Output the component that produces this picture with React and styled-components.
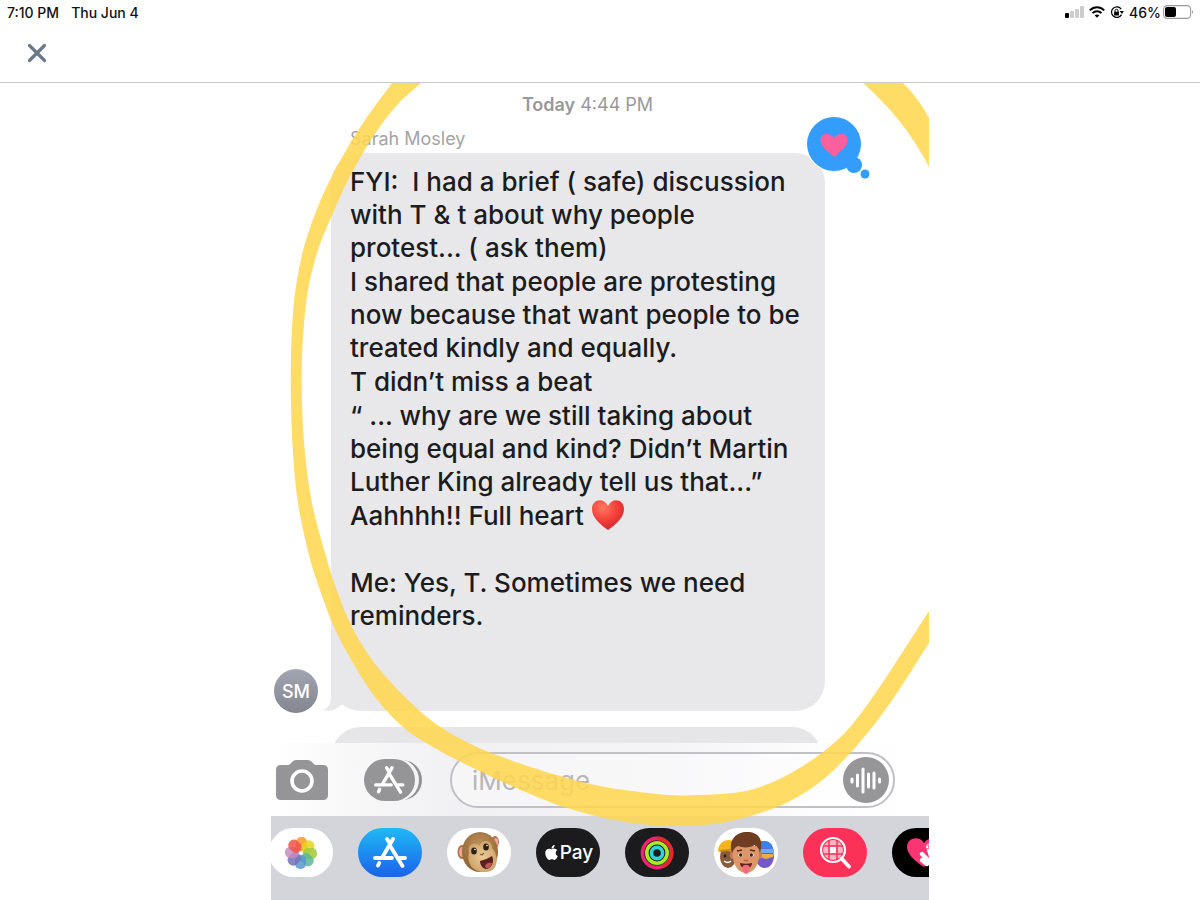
import styled, { createGlobalStyle, css } from 'styled-components';
import { FaApple } from 'react-icons/fa6';

const GlobalStyle = createGlobalStyle`
  * {
    box-sizing: border-box;
  }

  body {
    margin: 0;
    background: #fff;
    font-family: Inter, "Liberation Sans", sans-serif;
    color: #1c1c1e;
  }

  button {
    padding: 0;
    border: none;
    background: none;
    font-family: inherit;
    cursor: pointer;
  }
`;

const Page = styled.div`
  display: flex;
  flex-direction: column;
  min-height: 100vh;
`;

const StatusBar = styled.div`
  display: flex;
  justify-content: space-between;
  align-items: center;
  height: 24px;
  padding: 0 6px 0 7px;
  font-size: 14px;
  font-weight: 500;
  color: #111;
`;

const StatusGroup = styled.div`
  display: flex;
  align-items: center;
  gap: ${({ $gap }) => $gap}px;
`;

const Battery = styled.span`
  display: flex;
  align-items: center;
  gap: 2px;
`;

const NavBar = styled.header`
  display: flex;
  align-items: center;
  height: 59px;
  padding: 0 24px;
  border-bottom: 1px solid #c9cacc;
`;

const CloseButton = styled.button`
  display: flex;
  justify-content: center;
  align-items: center;
  width: 26px;
  height: 26px;
`;

const Photo = styled.main`
  position: relative;
  display: flex;
  flex-direction: column;
  width: 100%;
  max-width: 658px;
  margin: 0 auto;
  flex: 1;
  overflow: hidden;
`;

const Marker = styled.svg`
  position: absolute;
  top: 0;
  left: 0;
  width: 100%;
  pointer-events: none;
`;

const Chat = styled.section`
  display: flex;
  flex-direction: column;
  padding: 12px 0 0 3px;
`;

const Timestamp = styled.div`
  padding-right: 28px;
  font-size: 18px;
  line-height: 20px;
  text-align: center;
  color: #98989d;

  b {
    font-weight: 600;
  }
`;

const Sender = styled.div`
  padding: 13px 0 4px 76px;
  font-size: 18px;
  line-height: 21px;
  color: #a3a3a8;
`;

const MessageRow = styled.div`
  display: flex;
  align-items: flex-end;
  gap: 13px;
`;

const Avatar = styled.div`
  display: flex;
  justify-content: center;
  align-items: center;
  flex: none;
  width: 44px;
  height: 44px;
  border-radius: 50%;
  background: linear-gradient(#a2a6b3, #83858f);
  color: #fff;
  font-size: 18px;
  font-weight: 500;
`;

const Bubble = styled.div`
  position: relative;
  flex: 1;
  margin: 0 104px 2px 0;
  padding: 12px 0 79px 19px;
  border-radius: 30px;
  background: #e8e8ea;
`;

const Tail = styled.svg`
  position: absolute;
  left: -9px;
  bottom: 0;
`;

const Reaction = styled.svg`
  position: absolute;
  top: -37px;
  right: -47px;
`;

const MessageText = styled.div`
  position: relative;
  z-index: 1;
  display: grid;
  gap: 1px;
  font-size: 26px;
  font-weight: 450;
  line-height: 33px;
  white-space: pre;

  p {
    margin: 0;
  }

  p:last-child {
    margin-top: 33px;
  }

  svg {
    vertical-align: -6px;
  }
`;

const NextBubble = styled.div`
  height: 60px;
  margin: 14px 107px -44px 57px;
  border-radius: 30px;
  background: #e6e6e8;
`;

const Toolbar = styled.div`
  display: flex;
  align-items: center;
  padding: 9px 34px 8px 5px;
  background: linear-gradient(90deg, #fff 0%, #f8f8f9 12%, #f1f1f3 28%, #f4f4f6 60%, #fdfdfe 84%, #fff 100%);
`;

const ToolButton = styled.button`
  display: flex;
  flex: none;
  margin-right: ${({ $space }) => $space}px;
`;

const Field = styled.div`
  display: flex;
  align-items: center;
  flex: 1;
  min-width: 0;
  height: 56px;
  padding: 0 4px 0 20px;
  border: 2px solid #c0c0c5;
  border-radius: 28px;
  background: rgba(255, 255, 255, 0.35);
`;

const MessageInput = styled.input`
  flex: 1;
  width: 100%;
  min-width: 0;
  padding: 0;
  border: none;
  outline: none;
  background: none;
  font-family: inherit;
  font-size: 26px;

  &::placeholder {
    color: #b6b6bb;
    opacity: 1;
  }
`;

const Tray = styled.nav`
  display: flex;
  align-items: flex-start;
  gap: 25px;
  flex: 1;
  min-height: 84px;
  padding: 12px 0 0;
  margin-left: -2px;
  background: #d4d5db;
`;

const pillColors = {
  white: '#fff',
  blue: 'linear-gradient(#1fb9f6, #1b63ea)',
  dark: '#1b1b1d',
  pink: '#fc3158',
  black: '#000',
};

const AppPill = styled.button`
  display: flex;
  justify-content: center;
  align-items: center;
  flex: none;
  width: 64px;
  height: 49px;
  border-radius: 25px;
  background: ${({ $tone }) => pillColors[$tone]};
  ${({ $label }) => $label && css`
    color: #fff;
    font-size: 19px;
    font-weight: 500;
  `}
`;

// smooth curve through a list of points
const curve = (pts, first) => {
  let d = `${first} ${pts[0][0]} ${pts[0][1]}`;
  for (let i = 0; i < pts.length - 1; i++) {
    const p0 = pts[i - 1] || pts[i];
    const p1 = pts[i];
    const p2 = pts[i + 1];
    const p3 = pts[i + 2] || p2;
    d += ` C ${p1[0] + (p2[0] - p0[0]) / 6} ${p1[1] + (p2[1] - p0[1]) / 6}`;
    d += ` ${p2[0] - (p3[0] - p1[0]) / 6} ${p2[1] - (p3[1] - p1[1]) / 6} ${p2[0]} ${p2[1]}`;
  }
  return d;
};

const outer = [
  [121, 0], [92, 40], [74, 69], [58, 99], [44, 131], [33, 164], [26, 197], [22, 230],
  [20, 275], [20, 320], [22, 370], [27, 420], [38, 472], [50, 510], [63, 544], [82, 580],
  [104, 614], [132, 644], [162, 664], [200, 684], [252, 708], [290, 723], [329, 734],
  [370, 741], [410, 743], [450, 740], [486, 731], [519, 718], [554, 695], [589, 659],
  [622, 616], [658, 560],
];

const inner = [
  [658, 528], [638, 559], [610, 602], [580, 643], [552, 669], [520, 690], [489, 704],
  [462, 710], [429, 712], [396, 712], [362, 708], [329, 703], [289, 693], [239, 677],
  [202, 662], [165, 641], [131, 611], [102, 578], [81, 544], [66, 508], [54, 470],
  [41, 420], [34, 370], [31, 320], [31, 275], [34, 230], [39, 197], [48, 164], [62, 130],
  [77, 97], [92, 70], [108, 45], [127, 21], [150, 0],
];

function YellowMarker() {
  return (
    <Marker viewBox="0 0 658 817" aria-hidden="true">
      <g fill="#ffd64d" fillOpacity="0.86">
        <path d={`${curve(outer, 'M')} ${curve(inner, 'L')} Z`} />
        <path d="M592 0 C617 22 641 50 658 84 L658 35 C650 20 642 10 632 0 Z" />
      </g>
    </Marker>
  );
}

function StatusIcons() {
  return (
    <>
      <svg width="19" height="12" viewBox="0 0 19 12" aria-label="Signal">
        <rect x="0" y="7" width="4" height="5" rx="1" fill="#000" />
        <rect x="5" y="5" width="4" height="7" rx="1" fill="#ccc" />
        <rect x="10" y="3" width="4" height="9" rx="1" fill="#ccc" />
        <rect x="15" y="0" width="4" height="12" rx="1" fill="#ccc" />
      </svg>
      <svg width="16" height="12" viewBox="0 0 16 12" aria-label="Wi-Fi">
        <g fill="none" stroke="#000" strokeWidth="2">
          <path d="M0.8 4.4 C5 0.2 11 0.2 15.2 4.4" />
          <path d="M3.5 7.1 C6 4.6 10 4.6 12.5 7.1" />
        </g>
        <path d="M8 11.8 L5.6 9.3 C7 8.1 9 8.1 10.4 9.3 Z" />
      </svg>
      <svg width="14" height="13" viewBox="0 0 14 13" aria-label="Rotation lock">
        <path d="M11.3 3.3 A5.3 5.3 0 1 0 11.5 8.6" fill="none" stroke="#000" strokeWidth="1.2" />
        <path d="M9.6 5 L13.8 5 L12 8 Z" />
        <rect x="4.1" y="5.8" width="4.8" height="3.7" rx="0.5" />
        <path d="M5 6 V4.8 A1.5 1.5 0 0 1 8 4.8 V6" fill="none" stroke="#000" />
      </svg>
    </>
  );
}

function StoreGlyph() {
  return (
    <g fill="none" stroke="#fff" strokeWidth="3.8" strokeLinecap="round">
      <path d="M20 2 L9.5 20" />
      <path d="M14 2 L16.5 6" />
      <path d="M17.5 9.5 L29.5 29" />
      <path d="M2 21 H19" />
      <path d="M27 21 H32" />
      <path d="M6.2 26 L5 28.5" />
    </g>
  );
}

function PhotosIcon() {
  const petals = ['#f79a1e', '#e3d51f', '#9dc93c', '#5cba94', '#5a97cf', '#7273b8', '#c58bc0', '#ee5348'];
  return (
    <svg width="36" height="36" viewBox="-18 -18 36 36" aria-hidden="true">
      {petals.map((color, i) => (
        <rect
          key={color}
          x="-5"
          y="-16"
          width="11"
          height="14"
          rx="5"
          fill={color}
          fillOpacity="0.85"
          transform={`rotate(${i * 45})`}
        />
      ))}
    </svg>
  );
}

function MonkeyIcon() {
  return (
    <svg width="44" height="42" viewBox="0 0 44 42" aria-hidden="true">
      <defs>
        <radialGradient id="fur" cx="0.5" cy="0.35" r="0.65">
          <stop offset="0" stopColor="#c0935a" />
          <stop offset="1" stopColor="#8f6236" />
        </radialGradient>
        <radialGradient id="muzzle">
          <stop offset="0" stopColor="#eccb96" />
          <stop offset="1" stopColor="#cfa56c" />
        </radialGradient>
      </defs>
      <ellipse cx="5" cy="20" rx="4.5" ry="7" fill="#a8743d" />
      <ellipse cx="5" cy="20" rx="3" ry="5" fill="#eda79a" />
      <ellipse cx="38" cy="10" rx="4" ry="6" fill="#a8743d" />
      <ellipse cx="39" cy="10" rx="2.2" ry="4" fill="#eda79a" />
      <ellipse cx="23" cy="20" rx="18" ry="20" fill="url(#fur)" />
      <path d="M12 21 C10 12 18 9 22 14 C26 6 35 8 35 16 C43 24 41 40 29 40 C17 41 9 32 12 21 Z" fill="url(#muzzle)" />
      <ellipse cx="17" cy="19" rx="2.8" ry="3.6" fill="#2b2118" />
      <ellipse cx="29" cy="15" rx="2.8" ry="3.6" fill="#2b2118" />
      <circle cx="18" cy="17.5" r="0.8" fill="#fff" />
      <circle cx="30" cy="13.5" r="0.8" fill="#fff" />
      <path d="M23 22 l2 1 l2 -2" stroke="#8a5f35" strokeWidth="1.2" fill="none" />
      <path d="M23 29 C27 28 32 26 35 24 C38 30 34 37 29 37 C26 37 23 33 23 29 Z" fill="#5a1f22" />
      <path d="M28 34 C29 31 32 30 35 31 C34 35 31 37 29 36 Z" fill="#c0565e" />
    </svg>
  );
}

function RingsIcon() {
  return (
    <svg width="34" height="34" viewBox="-17 -17 34 34" aria-hidden="true">
      <g fill="none" strokeWidth="3.6">
        <circle r="14.6" stroke="#f0246e" />
        <path d="M0 -14.6 A14.6 14.6 0 0 1 6 13.3" stroke="#e8262d" />
        <circle r="10.2" stroke="#a5ec22" />
        <circle r="5.6" stroke="#2cd5da" />
      </g>
    </svg>
  );
}

function MemojiIcon() {
  return (
    <svg width="60" height="44" viewBox="0 0 60 44" aria-hidden="true">
      <ellipse cx="12" cy="26" rx="8" ry="11" fill="#8a5a3a" />
      <path d="M2 21 C2 13 7 9 13 9 C18 9 20 12 21 19 L20 22 C12 19 7 20 2 21 Z" fill="#f2b51d" />
      <path d="M4 20 L20 18" stroke="#d08d12" strokeWidth="2" />
      <circle cx="9" cy="25" r="1.4" fill="#24150e" />
      <path d="M8 30 q4 3 7 0" stroke="#fff" strokeWidth="1.5" fill="none" />
      <path d="M39 14 C42 8 56 8 57 18 L58 26 C57 34 53 37 48 37 C42 36 39 30 39 24 Z" fill="#7659c8" />
      <path d="M40 17 C41 8 56 7 57 18 Z" fill="#3d82e8" />
      <path d="M40 18 H58 V22 H40 Z" fill="#6faaf3" />
      <path d="M44 23 H57 V26 L50 28 L44 26 Z" fill="#e7ae46" />
      <ellipse cx="17" cy="24" rx="3" ry="4" fill="#c97f58" />
      <ellipse cx="43" cy="24" rx="3" ry="4" fill="#c97f58" />
      <path d="M17 15 H43 V27 C42 36 36 42 30 42 C24 42 18 36 17 27 Z" fill="#dc9669" />
      <path d="M16 22 C12 9 20 1 31 1 C43 1 48 9 44 22 C43 18 42 16 39 14 C34 17 27 17 22 15 C19 16 18 18 16 22 Z" fill="#6f3d22" />
      <path d="M21 20 l5 -1 M34 19 l5 1" stroke="#5c301a" strokeWidth="1.6" />
      <ellipse cx="24.5" cy="24" rx="2.3" ry="1.8" fill="#fff" />
      <ellipse cx="35.5" cy="24" rx="2.3" ry="1.8" fill="#fff" />
      <circle cx="24.7" cy="24" r="1.7" fill="#37251b" />
      <circle cx="35.3" cy="24" r="1.7" fill="#37251b" />
      <path d="M28 29 q2 1.5 4 0" stroke="#b5653f" strokeWidth="1.2" fill="none" />
      <path d="M24 32 C28 33 32 33 36 32 C36 35 34 37 30 37 C26 37 24 35 24 32 Z" fill="#662021" />
      <path d="M26.5 35 C28 33.5 32 33.5 33.5 35 L32.5 41 C31 43.5 29 43.5 27.5 41 Z" fill="#f06d7c" />
    </svg>
  );
}

function ImagesIcon() {
  return (
    <svg width="34" height="34" viewBox="0 0 34 34" aria-hidden="true">
      <g fill="none" stroke="#fff">
        <circle cx="15" cy="14" r="12" strokeWidth="2.2" />
        <circle cx="15" cy="14" r="10" fill="#fff" fillOpacity="0.65" stroke="none" />
        <path d="M5 10 H25 M5 18 H25 M11 4 V24 M19 4 V24" stroke="#fc3158" strokeWidth="1.5" />
        <rect x="12" y="11" width="6" height="6" fill="#fff" stroke="none" />
        <path d="M23.5 22.5 L31 30.5" strokeWidth="3.8" strokeLinecap="round" />
      </g>
    </svg>
  );
}

function HeartHandIcon() {
  return (
    <svg width="34" height="32" viewBox="0 0 34 32" aria-hidden="true">
      <path d="M17 30 C6 23 0 16 0 10 C0 1 12 -2 17 6 C22 -2 34 1 34 10 C34 16 28 23 17 30 Z" fill="#fb3474" />
      <g fill="none" stroke="#fff" strokeWidth="4.4" strokeLinecap="round">
        <path d="M15 17 L24 26 M21 9 L25 22 M15 23 L20 27" />
      </g>
      <circle cx="20" cy="10" r="2" fill="none" stroke="#fb3474" />
    </svg>
  );
}

const apps = [
  { name: 'Photos', tone: 'white', icon: <PhotosIcon /> },
  {
    name: 'App Store',
    tone: 'blue',
    icon: <svg width="34" height="31" viewBox="0 0 34 31" aria-hidden="true"><StoreGlyph /></svg>,
  },
  { name: 'Animoji', tone: 'white', icon: <MonkeyIcon /> },
  { name: 'Apple Pay', tone: 'dark', label: true, icon: <><FaApple size={17} />Pay</> },
  { name: 'Activity', tone: 'dark', icon: <RingsIcon /> },
  { name: 'Memoji', tone: 'white', icon: <MemojiIcon /> },
  { name: 'Images', tone: 'pink', icon: <ImagesIcon /> },
  { name: 'Digital Touch', tone: 'black', icon: <HeartHandIcon /> },
];

const paragraphs = [
  'FYI:  I had a brief ( safe) discussion\nwith T & t about why people\nprotest... ( ask them)',
  'I shared that people are protesting\nnow because that want people to be\ntreated kindly and equally.',
  'T didn’t miss a beat',
  '“ ... why are we still taking about\nbeing equal and kind? Didn’t Martin\nLuther King already tell us that...”',
];

export default function App() {
  return (
    <Page>
      <GlobalStyle />
      <StatusBar>
        <StatusGroup $gap={12}>
          <span>7:10 PM</span>
          <span>Thu Jun 4</span>
        </StatusGroup>
        <StatusGroup $gap={5}>
          <StatusIcons />
          <Battery>
            46%
            <svg width="31" height="14" viewBox="0 0 31 14" aria-label="Battery">
              <rect x="0.6" y="0.6" width="27" height="12.8" rx="3.6" fill="#fff" stroke="#999" strokeWidth="1.1" />
              <rect x="2" y="2" width="11" height="10" rx="2" />
              <path d="M29 5 Q31 7 29 9 Z" fill="#999" />
            </svg>
          </Battery>
        </StatusGroup>
      </StatusBar>

      <NavBar>
        <CloseButton aria-label="Close">
          <svg width="20" height="20" viewBox="0 0 20 20">
            <path d="M2.5 2.5 L17.5 17.5 M17.5 2.5 L2.5 17.5" stroke="#6d7886" strokeWidth="3.2" strokeLinecap="round" />
          </svg>
        </CloseButton>
      </NavBar>

      <Photo>
        <Chat>
          <Timestamp><b>Today</b> 4:44 PM</Timestamp>
          <Sender>Sarah Mosley</Sender>
          <MessageRow>
            <Avatar>SM</Avatar>
            <Bubble>
              <Tail width="32" height="32" viewBox="0 0 32 32" aria-hidden="true">
                <path d="M9 0 V18 C9 25 6 30 0 31 C7 33 14 31 18 27 L32 18 V0 Z" fill="#e8e8ea" />
              </Tail>
              <Reaction width="66" height="66" viewBox="-1 -1 66 66" role="img" aria-label="Loved">
                <g stroke="#fff" strokeWidth="2" fill="#fff">
                  <circle cx="27" cy="27" r="27" />
                  <circle cx="47" cy="48" r="8" />
                </g>
                <g fill="#349dfb">
                  <circle cx="27" cy="27" r="27" />
                  <circle cx="47" cy="48" r="8" />
                  <circle cx="58" cy="57" r="4.5" />
                </g>
                <path d="M27 40 C19 33 13.5 29 13.5 23 C13.5 16 23 15 27 21 C31 15 40.500 16 40.500 23 C40.500 29 35 33 27 40 Z" fill="#fb609c" />
              </Reaction>
              <MessageText>
                {paragraphs.map((text) => <p key={text}>{text}</p>)}
                <p>
                  Aahhhh!! Full heart{' '}
                  <svg width="34" height="32" viewBox="0 0 34 32" role="img" aria-label="red heart">
                    <defs>
                      <radialGradient id="heart" cx="0.35" cy="0.25" r="0.8">
                        <stop offset="0" stopColor="#ff7a62" />
                        <stop offset="0.5" stopColor="#f4443b" />
                        <stop offset="1" stopColor="#d3232a" />
                      </radialGradient>
                    </defs>
                    <path d="M17 31 C10 26 1 19 1 10 C1 0 13 -2 17 7 C21 -2 33 0 33 10 C33 19 24 26 17 31 Z" fill="url(#heart)" />
                  </svg>
                </p>
                <p>{'Me: Yes, T. Sometimes we need\nreminders.'}</p>
              </MessageText>
            </Bubble>
          </MessageRow>
          <NextBubble />
        </Chat>

        <Toolbar>
          <ToolButton aria-label="Camera" $space={36}>
            <svg width="52" height="40" viewBox="0 0 52 40">
              <path d="M5 5 H12 C15 5 16 0 20 0 H32 C36 0 37 5 40 5 H47 Q52 5 52 10 V35 Q52 40 47 40 H5 Q0 40 0 35 V10 Q0 5 5 5 Z" fill="#959597" />
              <circle cx="26" cy="21" r="10" fill="none" stroke="#fff" strokeWidth="3.6" />
            </svg>
          </ToolButton>
          <ToolButton aria-label="Apps" $space={28}>
            <svg width="58" height="42" viewBox="0 0 58 42">
              <rect x="7" y="1" width="51" height="40" rx="20" fill="#929294" />
              <rect x="1" y="0" width="54" height="42" rx="21" fill="#f5f5f6" />
              <rect x="0" y="0" width="51" height="42" rx="21" fill="#959597" />
              <g transform="translate(10 7) scale(0.9)"><StoreGlyph /></g>
            </svg>
          </ToolButton>
          <Field>
            <MessageInput type="text" aria-label="Message" placeholder="iMessage" />
            <ToolButton aria-label="Record audio" $space={0}>
              <svg width="46" height="46" viewBox="0 0 46 46">
                <circle cx="23" cy="23" r="23" fill="#969698" />
                <path d="M9 22 V25 M14.5 18 V29 M20 12 V35 M25.5 17 V30 M31 16 V31 M36.5 22 V25" stroke="#fff" strokeWidth="3" strokeLinecap="round" />
              </svg>
            </ToolButton>
          </Field>
        </Toolbar>

        <Tray aria-label="Message apps">
          {apps.map(({ name, tone, label, icon }) => (
            <AppPill key={name} $tone={tone} $label={label} aria-label={name}>{icon}</AppPill>
          ))}
        </Tray>
        <YellowMarker />
      </Photo>
    </Page>
  );
}
